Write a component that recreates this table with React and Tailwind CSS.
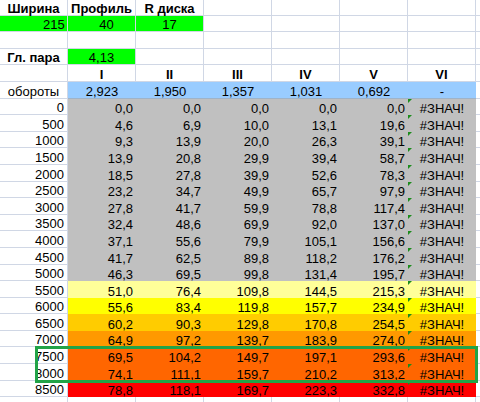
import React from "react";

const rows = [
  ["0", ["0,0", "0,0", "0,0", "0,0", "0,0"], "bg-[#c0c0c0]"],
  ["500", ["4,6", "6,9", "10,0", "13,1", "19,6"], "bg-[#c0c0c0]"],
  ["1000", ["9,3", "13,9", "20,0", "26,3", "39,1"], "bg-[#c0c0c0]"],
  ["1500", ["13,9", "20,8", "29,9", "39,4", "58,7"], "bg-[#c0c0c0]"],
  ["2000", ["18,5", "27,8", "39,9", "52,6", "78,3"], "bg-[#c0c0c0]"],
  ["2500", ["23,2", "34,7", "49,9", "65,7", "97,9"], "bg-[#c0c0c0]"],
  ["3000", ["27,8", "41,7", "59,9", "78,8", "117,4"], "bg-[#c0c0c0]"],
  ["3500", ["32,4", "48,6", "69,9", "92,0", "137,0"], "bg-[#c0c0c0]"],
  ["4000", ["37,1", "55,6", "79,9", "105,1", "156,6"], "bg-[#c0c0c0]"],
  ["4500", ["41,7", "62,5", "89,8", "118,2", "176,2"], "bg-[#c0c0c0]"],
  ["5000", ["46,3", "69,5", "99,8", "131,4", "195,7"], "bg-[#c0c0c0]"],
  ["5500", ["51,0", "76,4", "109,8", "144,5", "215,3"], "bg-[#ffff99]"],
  ["6000", ["55,6", "83,4", "119,8", "157,7", "234,9"], "bg-[#ffff00]"],
  ["6500", ["60,2", "90,3", "129,8", "170,8", "254,5"], "bg-[#ffcc00]"],
  ["7000", ["64,9", "97,2", "139,7", "183,9", "274,0"], "bg-[#ff9900]"],
  ["7500", ["69,5", "104,2", "149,7", "197,1", "293,6"], "bg-[#ff6600]"],
  ["8000", ["74,1", "111,1", "159,7", "210,2", "313,2"], "bg-[#ff6600]"],
  ["8500", ["78,8", "118,1", "169,7", "223,3", "332,8"], "bg-[#ff0000]"],
];

// plain white cell with excel gridlines
const Blank = ({ children, className = "" }) => (
  <div className={"w-[68px] shrink-0 h-full flex items-end border-r border-b border-[#d0d7e5] " + className}>
    {children}
  </div>
);

const Row = ({ children }) => <div className="flex h-[16.6px]">{children}</div>;

const Tail = () => <div className="flex-1 h-full border-b border-[#d0d7e5]" />;

const Tick = () => (
  <svg className="absolute left-0 top-0" width="4" height="4" viewBox="0 0 4 4">
    <polygon points="0,0 4,0 0,4" fill="#1c8c1c" />
  </svg>
);

export default function App() {
  return (
    <div className="w-[480px] h-[402px] overflow-hidden bg-white relative font-['Liberation_Sans',Arial,sans-serif] text-[13px] leading-[12px] text-black">
      <div className="-mt-px">
        <Row>
          <Blank className="justify-center font-bold">Ширина</Blank>
          <Blank className="justify-center font-bold">Профиль</Blank>
          <Blank className="justify-center font-bold">R диска</Blank>
          <Blank />
          <Blank />
          <Blank />
          <Blank />
          <Tail />
        </Row>
        <Row>
          <Blank className="bg-[#00ff00] border-[#8a9a8a] pl-[43px]">215</Blank>
          <Blank className="bg-[#00ff00] border-[#8a9a8a] justify-center pl-[10px]">40</Blank>
          <Blank className="bg-[#00ff00] border-[#8a9a8a] justify-center">17</Blank>
          <Blank />
          <Blank />
          <Blank />
          <Blank />
          <Tail />
        </Row>
        <Row>
          <Blank />
          <Blank />
          <Blank />
          <Blank />
          <Blank />
          <Blank />
          <Blank />
          <Tail />
        </Row>
        <Row>
          <Blank className="justify-center font-bold">Гл. пара</Blank>
          <Blank className="bg-[#00ff00] border-[#8a9a8a] justify-center">4,13</Blank>
          <Blank />
          <Blank />
          <Blank />
          <Blank />
          <Blank />
          <Tail />
        </Row>
        <Row>
          <Blank />
          {["I", "II", "III", "IV", "V", "VI"].map((r) => (
            <Blank key={r} className="justify-center font-bold">
              {r}
            </Blank>
          ))}
          <Tail />
        </Row>
        <Row>
          <Blank className="justify-center">обороты</Blank>
          {["2,923", "1,950", "1,357", "1,031", "0,692", "-"].map((v, i) => (
            <div
              key={i}
              className="w-[68px] shrink-0 h-full flex items-end justify-center bg-[#99ccff] border-b border-[#9fb3c8]"
            >
              {v}
            </div>
          ))}
          <Tail />
        </Row>
        {rows.map(([rpm, vals, bg]) => (
          <Row key={rpm}>
            <Blank className="justify-end pr-[3px]">{rpm}</Blank>
            {vals.map((v, i) => (
              <div key={i} className={"w-[68px] shrink-0 h-full flex items-end justify-end pr-[3px] " + bg}>
                {v}
              </div>
            ))}
            <div className={"w-[68px] shrink-0 h-full flex items-end justify-center relative " + bg}>
              <Tick />
              #ЗНАЧ!
            </div>
            <Tail />
          </Row>
        ))}
        <Row>
          <Blank />
          <Blank />
          <Blank />
          <Blank />
          <Blank />
          <Blank />
          <Blank />
          <Tail />
        </Row>
      </div>
      <div className="absolute left-[35px] top-[346px] w-[443px] h-[37px] border-[3px] border-[#22a347] pointer-events-none" />
    </div>
  );
}
